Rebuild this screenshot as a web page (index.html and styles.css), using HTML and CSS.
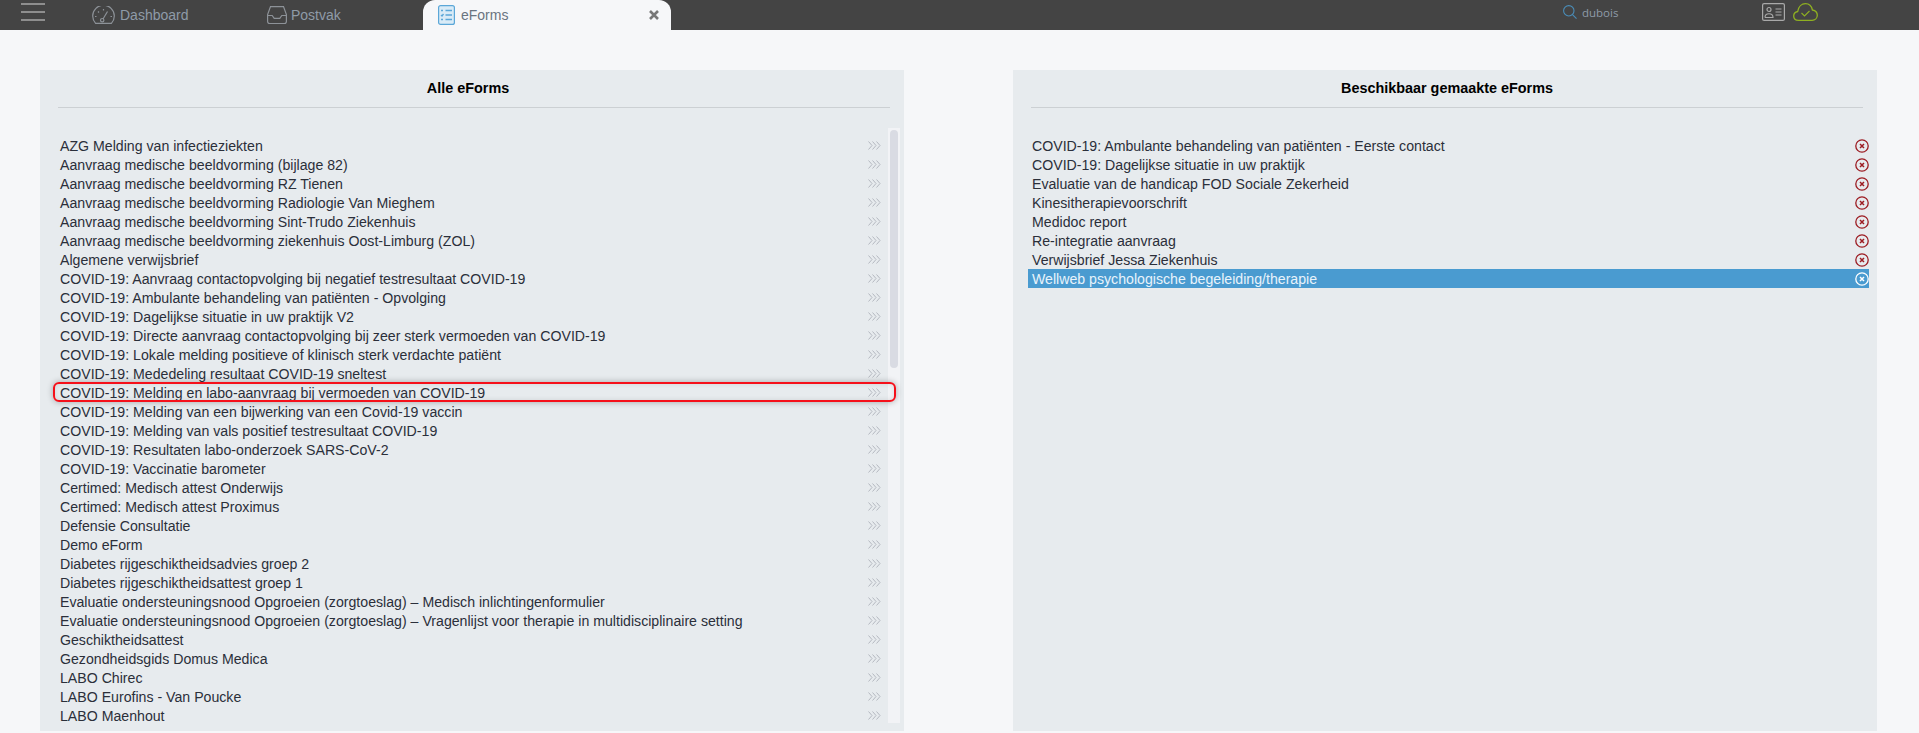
FILE: index.html

```html
<!DOCTYPE html>
<html lang="nl">
<head>
    <meta charset="UTF-8">
    <title>eForms</title>
    <link rel="stylesheet" href="styles.css">
</head>
<body>
    <div class="topbar">
        <div class="menu-btn"><span></span><span></span><span></span></div>
        <div class="nav-tab tab-dashboard">
            <svg width="23" height="18" viewBox="0 0 23 18" fill="none" stroke="#8d9298" stroke-width="1.2">
                <path d="M3.600 17.400h15.800a10.800 10.800 0 1 0-15.800 0Z"/>
                <path d="M11 13 15.500 5.500"/>
                <circle cx="10.200" cy="14.200" r="1.700"/>
                <path d="M3 10.500h1.500M6 5.500l1 1M11.500 3v1.500M18.500 10.500H20"/>
            </svg>
            Dashboard
        </div>
        <div class="nav-tab tab-postvak">
            <svg width="20" height="18" viewBox="0 0 20 18" fill="none" stroke="#8d9298" stroke-width="1.2">
                <path d="M3.500.6h13l2.900 8v7a2 2 0 0 1-2 2H2.600a2 2 0 0 1-2-2v-7Z"/>
                <path d="M.6 9.500h4.600l2 2.800h5.600l2-2.800h4.600"/>
            </svg>
            Postvak
        </div>
        <div class="nav-tab active-tab">
            <svg width="17" height="20" viewBox="0 0 17 20" fill="#d9ebf7" stroke="#5ba7d8" stroke-width="1.200">
                <rect x="0.600" y="0.600" width="15.800" height="18.800" rx="2"/>
                <path d="M7.500 5.500h6.500M7.500 10h6.500M7.500 14.500h6.500" fill="none" stroke-width="1.500"/>
                <path d="M3 5.500h2M3 10l1 1 1.500-2M3 14.500h2" fill="none" stroke-width="1.300"/>
            </svg>
            <span class="tab-label">eForms</span>
            <svg class="tab-close" width="10" height="10" viewBox="0 0 10 10" fill="none" stroke="#777" stroke-width="2.600">
                <path d="M1 1l8 8M9 1l-8 8"/>
            </svg>
        </div>
        <div class="top-right">
            <div class="search">
                <svg width="14" height="14" viewBox="0 0 14 14" fill="none" stroke="#4a8db8" stroke-width="1.100">
                    <circle cx="5.800" cy="5.800" r="5.200"/>
                    <path d="M9.500 9.600 13.500 13.600"/>
                </svg>
                <span>dubois</span>
            </div>
            <div class="status-icons">
                <svg width="23" height="18" viewBox="0 0 23 18" fill="none" stroke="#a9a9a9" stroke-width="1.200">
                    <rect x="0.600" y="0.600" width="21.800" height="16.800" rx="1.500"/>
                    <circle cx="7" cy="6.500" r="2"/>
                    <path d="M3 14.500c0-5 8-5 8 0H3M13.500 6h6M13.500 9h6M13.500 12h6"/>
                </svg>
                <svg width="25" height="18" viewBox="0 0 25 18" fill="none" stroke="#8fb021" stroke-width="1.300">
                    <path d="M5.500 17.300C2.400 17.300.7 15.300.7 13S2.300 9 4.700 8.500C5.500 3.700 8.800.7 12.400.7s6.300 2.800 7 6.300c2.800.5 4.900 2.800 4.900 5.300 0 2.900-2.200 5-5.200 5Z"/>
                    <path d="M8.500 10l3 3 5-5" stroke-width="1.100"/>
                </svg>
            </div>
        </div>
    </div>

    <div class="content">
        <section class="panel panel-all">
            <h2>Alle eForms</h2>
            <div class="list-wrap">
                <ul class="form-list" id="allForms"></ul>
                <div class="scrollbar"><div class="thumb"></div></div>
            </div>
        </section>
        <section class="panel">
            <h2>Beschikbaar gemaakte eForms</h2>
            <ul class="form-list chosen" id="chosenForms"></ul>
        </section>
    </div>

    <script src="script.js"></script>
</body>
</html>
```

FILE: styles.css

```css
* {
    box-sizing: border-box;
}
html, body {
    height: 100%;
}
body {
    margin: 0;
    overflow: hidden;
    background-color: #f6f7f9;
    font-family: "Liberation Sans", Arial, sans-serif;
    font-size: 14.15px;
    color: #2b2f3a;
}
svg {
    flex-shrink: 0;
}
.topbar {
    display: flex;
    align-items: center;
    height: 30px;
    background-color: #444;
}
.menu-btn {
    display: flex;
    flex-direction: column;
    gap: 6px;
    width: 24px;
    margin-left: 21px;
    margin-top: -6px;
}
.menu-btn span {
    display: block;
    height: 2px;
    background-color: #8e8e8e;
}
.nav-tab {
    display: flex;
    align-items: center;
    color: #8f9ba8;
    font-size: 14px;
}
.tab-dashboard {
    gap: 5px;
    width: 175px;
    margin-left: 47px;
}
.tab-postvak {
    gap: 4px;
    width: 156px;
}
.active-tab {
    gap: 6px;
    width: 248px;
    height: 30px;
    padding: 0 12px 0 15px;
    background-color: #f6f7f9;
    border-radius: 12px 12px 0 0;
    color: #6a7480;
}
.tab-label {
    flex: 1;
}
.top-right {
    display: flex;
    align-items: center;
    margin-left: 892px;
    margin-top: -6px;
}
.search {
    display: flex;
    align-items: center;
    gap: 5px;
    width: 199px;
    color: #8f9ba8;
    font-family: "Open Sans", sans-serif;
    font-size: 11.5px;
}
.status-icons {
    display: flex;
    align-items: center;
    gap: 8px;
}
.content {
    display: grid;
    grid-template-columns: 864px 864px;
    column-gap: 109px;
    padding: 40px 0 0 40px;
}
.panel {
    height: 661px;
    padding: 0 14px 0 18px;
    background-color: #e7ebee;
}
.panel h2 {
    height: 38px;
    margin: 0 0 28px;
    padding-top: 10px;
    border-bottom: 1px solid #ccd0d3;
    color: #000;
    font-size: 14.4px;
    font-weight: bold;
    text-align: center;
}
.panel-all h2 {
    padding-right: 12px;
}
.list-wrap {
    position: relative;
}
.form-list {
    margin: 0;
    padding: 0;
    list-style: none;
}
.form-item {
    display: flex;
    align-items: center;
    justify-content: space-between;
    height: 19px;
    padding: 0 15px 0 2px;
    margin-right: -6px;
    white-space: nowrap;
}
.chosen {
    margin: 0 -6px 0 -3px;
}
.chosen .form-item {
    margin-right: 0;
    padding: 0 0 0 4px;
}
.form-item.selected {
    background-color: #4a9bd0;
    color: #e8f3fb;
}
.form-item.marked {
    position: relative;
    z-index: 1;
}
/* red marking drawn over the row */
.form-item.marked::after {
    content: "";
    position: absolute;
    left: -5px;
    right: 0;
    top: -1px;
    bottom: 0;
    border: 2px solid #f5101a;
    border-radius: 6px;
    box-shadow: 0 0 6px rgba(0, 0, 0, 0.3), inset 0 0 5px rgba(0, 0, 0, 0.1);
}
.scrollbar {
    position: absolute;
    top: -8px;
    right: -10px;
    width: 12px;
    height: 595px;
    padding: 2px;
    background-color: #f2f3f6;
}
.thumb {
    height: 238px;
    background-color: #d9dbe3;
    border-radius: 4px;
}
```

FILE: script.js

```js
const allForms = [
    "AZG Melding van infectieziekten",
    "Aanvraag medische beeldvorming (bijlage 82)",
    "Aanvraag medische beeldvorming RZ Tienen",
    "Aanvraag medische beeldvorming Radiologie Van Mieghem",
    "Aanvraag medische beeldvorming Sint-Trudo Ziekenhuis",
    "Aanvraag medische beeldvorming ziekenhuis Oost-Limburg (ZOL)",
    "Algemene verwijsbrief",
    "COVID-19: Aanvraag contactopvolging bij negatief testresultaat COVID-19",
    "COVID-19: Ambulante behandeling van patiënten - Opvolging",
    "COVID-19: Dagelijkse situatie in uw praktijk V2",
    "COVID-19: Directe aanvraag contactopvolging bij zeer sterk vermoeden van COVID-19",
    "COVID-19: Lokale melding positieve of klinisch sterk verdachte patiënt",
    "COVID-19: Mededeling resultaat COVID-19 sneltest",
    "COVID-19: Melding en labo-aanvraag bij vermoeden van COVID-19",
    "COVID-19: Melding van een bijwerking van een Covid-19 vaccin",
    "COVID-19: Melding van vals positief testresultaat COVID-19",
    "COVID-19: Resultaten labo-onderzoek SARS-CoV-2",
    "COVID-19: Vaccinatie barometer",
    "Certimed: Medisch attest Onderwijs",
    "Certimed: Medisch attest Proximus",
    "Defensie Consultatie",
    "Demo eForm",
    "Diabetes rijgeschiktheidsadvies groep 2",
    "Diabetes rijgeschiktheidsattest groep 1",
    "Evaluatie ondersteuningsnood Opgroeien (zorgtoeslag) – Medisch inlichtingenformulier",
    "Evaluatie ondersteuningsnood Opgroeien (zorgtoeslag) – Vragenlijst voor therapie in multidisciplinaire setting",
    "Geschiktheidsattest",
    "Gezondheidsgids Domus Medica",
    "LABO Chirec",
    "LABO Eurofins - Van Poucke",
    "LABO Maenhout"
];

const chosenForms = [
    "COVID-19: Ambulante behandeling van patiënten - Eerste contact",
    "COVID-19: Dagelijkse situatie in uw praktijk",
    "Evaluatie van de handicap FOD Sociale Zekerheid",
    "Kinesitherapievoorschrift",
    "Medidoc report",
    "Re-integratie aanvraag",
    "Verwijsbrief Jessa Ziekenhuis",
    "Wellweb psychologische begeleiding/therapie"
];

const arrowsIcon = '<svg width="13" height="9" viewBox="0 0 13 9" fill="none" stroke="#b4b8c0" stroke-width="1"><path d="M.5.5l3.500 4-3.500 4M4.500.5l3.500 4-3.500 4M8.500.5l3.500 4-3.500 4"/></svg>';

function removeIcon(color) {
    return '<svg width="14" height="14" viewBox="0 0 14 14" fill="none" stroke="' + color + '"><circle cx="7" cy="7" r="6.200" stroke-width="1.300"/><path d="M5 5l4 4M9 5l-4 4" stroke-width="1.500"/></svg>';
}

const allList = document.getElementById("allForms");
allForms.forEach(name => {
    const row = document.createElement("li");
    row.classList.add("form-item");
    if (name.startsWith("COVID-19: Melding en labo")) {
        row.classList.add("marked");
    }
    row.innerHTML = "<span>" + name + "</span>" + arrowsIcon;
    allList.appendChild(row);
});

const chosenList = document.getElementById("chosenForms");
chosenForms.forEach((name, i) => {
    const selected = i === chosenForms.length - 1;
    const row = document.createElement("li");
    row.classList.add("form-item");
    if (selected) {
        row.classList.add("selected");
    }
    row.innerHTML = "<span>" + name + "</span>" + removeIcon(selected ? "#fff" : "#9c1c22");
    chosenList.appendChild(row);
});
```
